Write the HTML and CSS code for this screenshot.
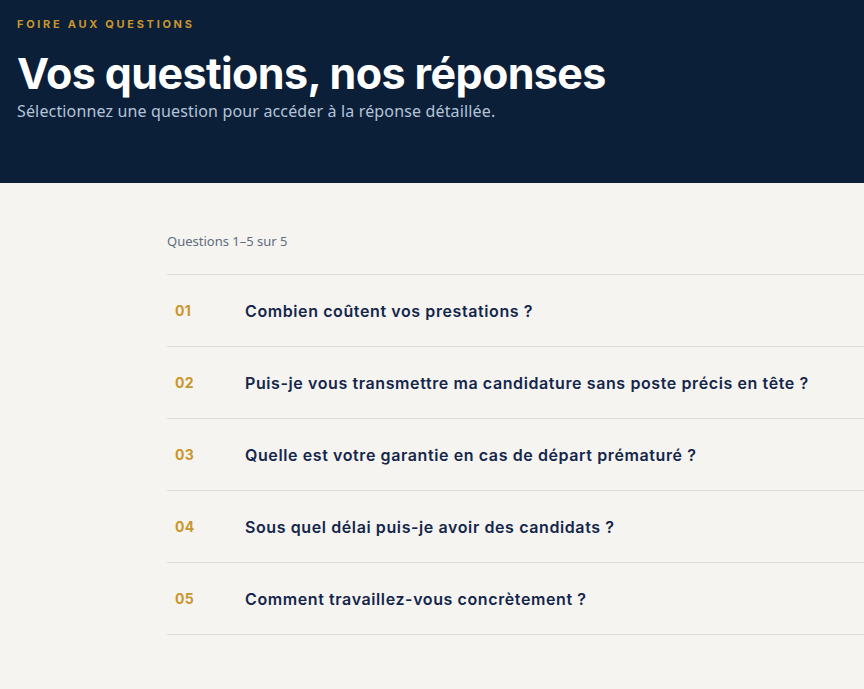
FILE: index.html
```html
<!DOCTYPE html>
<html lang="fr">
<head>
  <meta charset="UTF-8" />
  <meta name="viewport" content="width=device-width, initial-scale=1.0"/>
  <title>Foire aux questions</title>
  <link rel="stylesheet" href="styles.css">
</head>
<body>
  <header class="hero">
    <p class="eyebrow">Foire aux questions</p>
    <h1>Vos questions, nos réponses</h1>
    <p class="lead">Sélectionnez une question pour accéder à la réponse détaillée.</p>
  </header>

  <main class="faq">
    <p class="count">Questions 1–5 sur 5</p>
    <ul class="faq-list">
      <li><a href="#q1"><span class="num">01</span><span class="q">Combien coûtent vos prestations ?</span></a></li>
      <li><a href="#q2"><span class="num">02</span><span class="q">Puis-je vous transmettre ma candidature sans poste précis en tête ?</span></a></li>
      <li><a href="#q3"><span class="num">03</span><span class="q">Quelle est votre garantie en cas de départ prématuré ?</span></a></li>
      <li><a href="#q4"><span class="num">04</span><span class="q">Sous quel délai puis-je avoir des candidats ?</span></a></li>
      <li><a href="#q5"><span class="num">05</span><span class="q">Comment travaillez-vous concrètement ?</span></a></li>
    </ul>
  </main>
</body>
</html>
```

FILE: styles.css
```css
body { margin: 0; background: #f5f4f0; font-family: "Noto Sans", sans-serif; }

.hero { background: #0b1f38; height: 183px; box-sizing: border-box; padding: 17px 17px 0; }
.eyebrow {
  margin: 0;
  color: #c9962e;
  font: 700 11px/14px Inter, sans-serif;
  letter-spacing: 2.7px;
  text-transform: uppercase;
}
.hero h1 {
  margin: 18px 0 0;
  color: #fff;
  font: 700 43px/48px Inter, sans-serif;
  letter-spacing: -0.6px;
}
.lead { margin: 3px 0 0; color: #b4c4d8; font-size: 16px; line-height: 22px; letter-spacing: 0.15px; }

.faq { padding: 49px 0 0 167px; }
.count { margin: 0 0 24px; color: #5f6d7e; font-size: 13px; line-height: 18px; }
.faq-list { list-style: none; margin: 0; padding: 0; border-top: 1px solid #e0ddd6; }
.faq-list li { border-bottom: 1px solid #e0ddd6; }
.faq-list a {
  display: flex;
  align-items: center;
  height: 71px;
  padding-left: 8px;
  text-decoration: none;
}
.num { width: 70px; color: #c9962e; font: 700 14px Inter, sans-serif; letter-spacing: 0.3px; }
.q { color: #14264a; font: 600 16px Inter, sans-serif; letter-spacing: 0.6px; }
```
